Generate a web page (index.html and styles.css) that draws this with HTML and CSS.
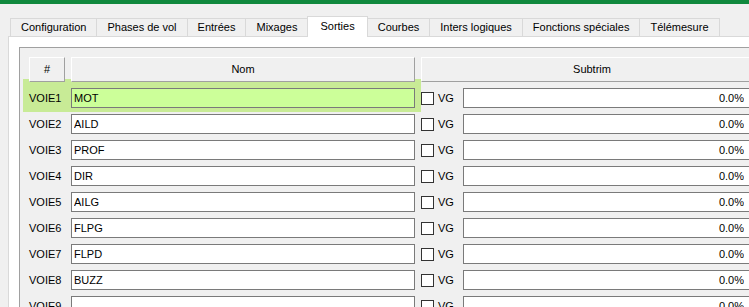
FILE: index.html
```html
<!DOCTYPE html>
<html lang="fr">
<head>
    <meta charset="UTF-8">
    <title>Sorties</title>
    <link rel="stylesheet" href="styles.css">
</head>
<body>
    <div class="topbar"></div>

    <div class="tabs">
        <div class="tab">Configuration</div>
        <div class="tab">Phases de vol</div>
        <div class="tab">Entrées</div>
        <div class="tab">Mixages</div>
        <div class="tab active">Sorties</div>
        <div class="tab">Courbes</div>
        <div class="tab">Inters logiques</div>
        <div class="tab">Fonctions spéciales</div>
        <div class="tab">Télémesure</div>
    </div>

    <div class="pane">
        <div class="frame">
            <div class="head">
                <div class="hcell hnum">#</div>
                <div class="hcell hname">Nom</div>
                <div class="hcell hsub">Subtrim</div>
            </div>

            <div class="row current">
                <span class="lbl">VOIE1</span>
                <input class="name" type="text" value="MOT">
                <label class="vg"><span class="box"></span>VG</label>
                <input class="sub" type="text" value="0.0%">
            </div>
            <div class="row">
                <span class="lbl">VOIE2</span>
                <input class="name" type="text" value="AILD">
                <label class="vg"><span class="box"></span>VG</label>
                <input class="sub" type="text" value="0.0%">
            </div>
            <div class="row">
                <span class="lbl">VOIE3</span>
                <input class="name" type="text" value="PROF">
                <label class="vg"><span class="box"></span>VG</label>
                <input class="sub" type="text" value="0.0%">
            </div>
            <div class="row">
                <span class="lbl">VOIE4</span>
                <input class="name" type="text" value="DIR">
                <label class="vg"><span class="box"></span>VG</label>
                <input class="sub" type="text" value="0.0%">
            </div>
            <div class="row">
                <span class="lbl">VOIE5</span>
                <input class="name" type="text" value="AILG">
                <label class="vg"><span class="box"></span>VG</label>
                <input class="sub" type="text" value="0.0%">
            </div>
            <div class="row">
                <span class="lbl">VOIE6</span>
                <input class="name" type="text" value="FLPG">
                <label class="vg"><span class="box"></span>VG</label>
                <input class="sub" type="text" value="0.0%">
            </div>
            <div class="row">
                <span class="lbl">VOIE7</span>
                <input class="name" type="text" value="FLPD">
                <label class="vg"><span class="box"></span>VG</label>
                <input class="sub" type="text" value="0.0%">
            </div>
            <div class="row">
                <span class="lbl">VOIE8</span>
                <input class="name" type="text" value="BUZZ">
                <label class="vg"><span class="box"></span>VG</label>
                <input class="sub" type="text" value="0.0%">
            </div>
            <div class="row">
                <span class="lbl">VOIE9</span>
                <input class="name" type="text" value="">
                <label class="vg"><span class="box"></span>VG</label>
                <input class="sub" type="text" value="0.0%">
            </div>
            <div class="row">
                <span class="lbl">VOIE10</span>
                <input class="name" type="text" value="">
                <label class="vg"><span class="box"></span>VG</label>
                <input class="sub" type="text" value="0.0%">
            </div>
        </div>
    </div>
</body>
</html>
```

FILE: styles.css
```css
html, body {
    margin: 0;
    height: 100%;
    overflow: hidden;
}
body {
    font-family: "Liberation Sans", Arial, sans-serif;
    font-size: 11px;
    color: #000;
    background-color: #f0f0f0;
}
.topbar {
    height: 4px;
    background-color: #10893e;
}
.tabs {
    display: flex;
    align-items: flex-end;
    height: 32px;
    padding-left: 10px;
}
.tab {
    box-sizing: border-box;
    height: 18px;
    line-height: 17px;
    padding: 0 10px;
    border: 1px solid #d9d9d9;
    border-right: none;
    border-bottom: none;
    background-color: #f0f0f0;
    white-space: nowrap;
}
.tab:last-child {
    border-right: 1px solid #d9d9d9;
}
.tab.active {
    position: relative;
    z-index: 2;
    height: 21px;
    line-height: 18px;
    padding: 0 12px;
    margin-bottom: -1px;
    border-right: 1px solid #d9d9d9;
    background-color: #fff;
}
.tab.active + .tab {
    border-left: none;
}
.pane {
    margin-left: 8px;
    width: 900px;
    height: 400px;
    padding: 10px 0 0 10px;
    border: 1px solid #d9d9d9;
    background-color: #fff;
}
.frame {
    height: 100%;
    padding: 9px 0 0 3px;
    border-top: 1px solid #a0a0a0;
    border-left: 1px solid #a0a0a0;
    background-color: #f0f0f0;
}
.head {
    display: flex;
    gap: 6px;
    padding-left: 6px;
    margin-bottom: 3px;
}
.hcell {
    position: relative;
    z-index: 1;
    box-sizing: border-box;
    height: 25px;
    line-height: 23px;
    text-align: center;
    background-color: #f0f0f0;
    border-top: 1px solid #fff;
    border-left: 1px solid #fff;
    border-right: 1px solid #a0a0a0;
    border-bottom: 1px solid #a0a0a0;
}
.hnum {
    width: 36px;
}
.hname {
    width: 344px;
}
.hsub {
    width: 342px;
}
.row {
    position: relative;
    display: flex;
    align-items: center;
    height: 26px;
}
.row > * {
    position: relative;
    z-index: 1;
}
.row.current::before {
    content: "";
    position: absolute;
    left: 0;
    top: -6px;
    width: 398px;
    height: 33px;
    background-color: #c8eb96;
}
.lbl {
    box-sizing: border-box;
    width: 48px;
    padding-left: 6px;
}
.row input {
    box-sizing: border-box;
    height: 20px;
    margin: 0;
    border: 1px solid #7a7a7a;
    border-radius: 0;
    background-color: #fff;
    font: inherit;
    color: #000;
    outline: none;
}
.name {
    width: 344px;
    padding: 0 2px;
}
.row.current .name {
    background-color: #ccff99;
}
.vg {
    display: flex;
    align-items: center;
    gap: 4px;
    width: 42px;
    margin-left: 6px;
}
.box {
    box-sizing: border-box;
    width: 13px;
    height: 13px;
    border: 1px solid #333;
    background-color: #fff;
}
.sub {
    width: 289px;
    padding: 0 7px 0 2px;
    text-align: right;
}
```
